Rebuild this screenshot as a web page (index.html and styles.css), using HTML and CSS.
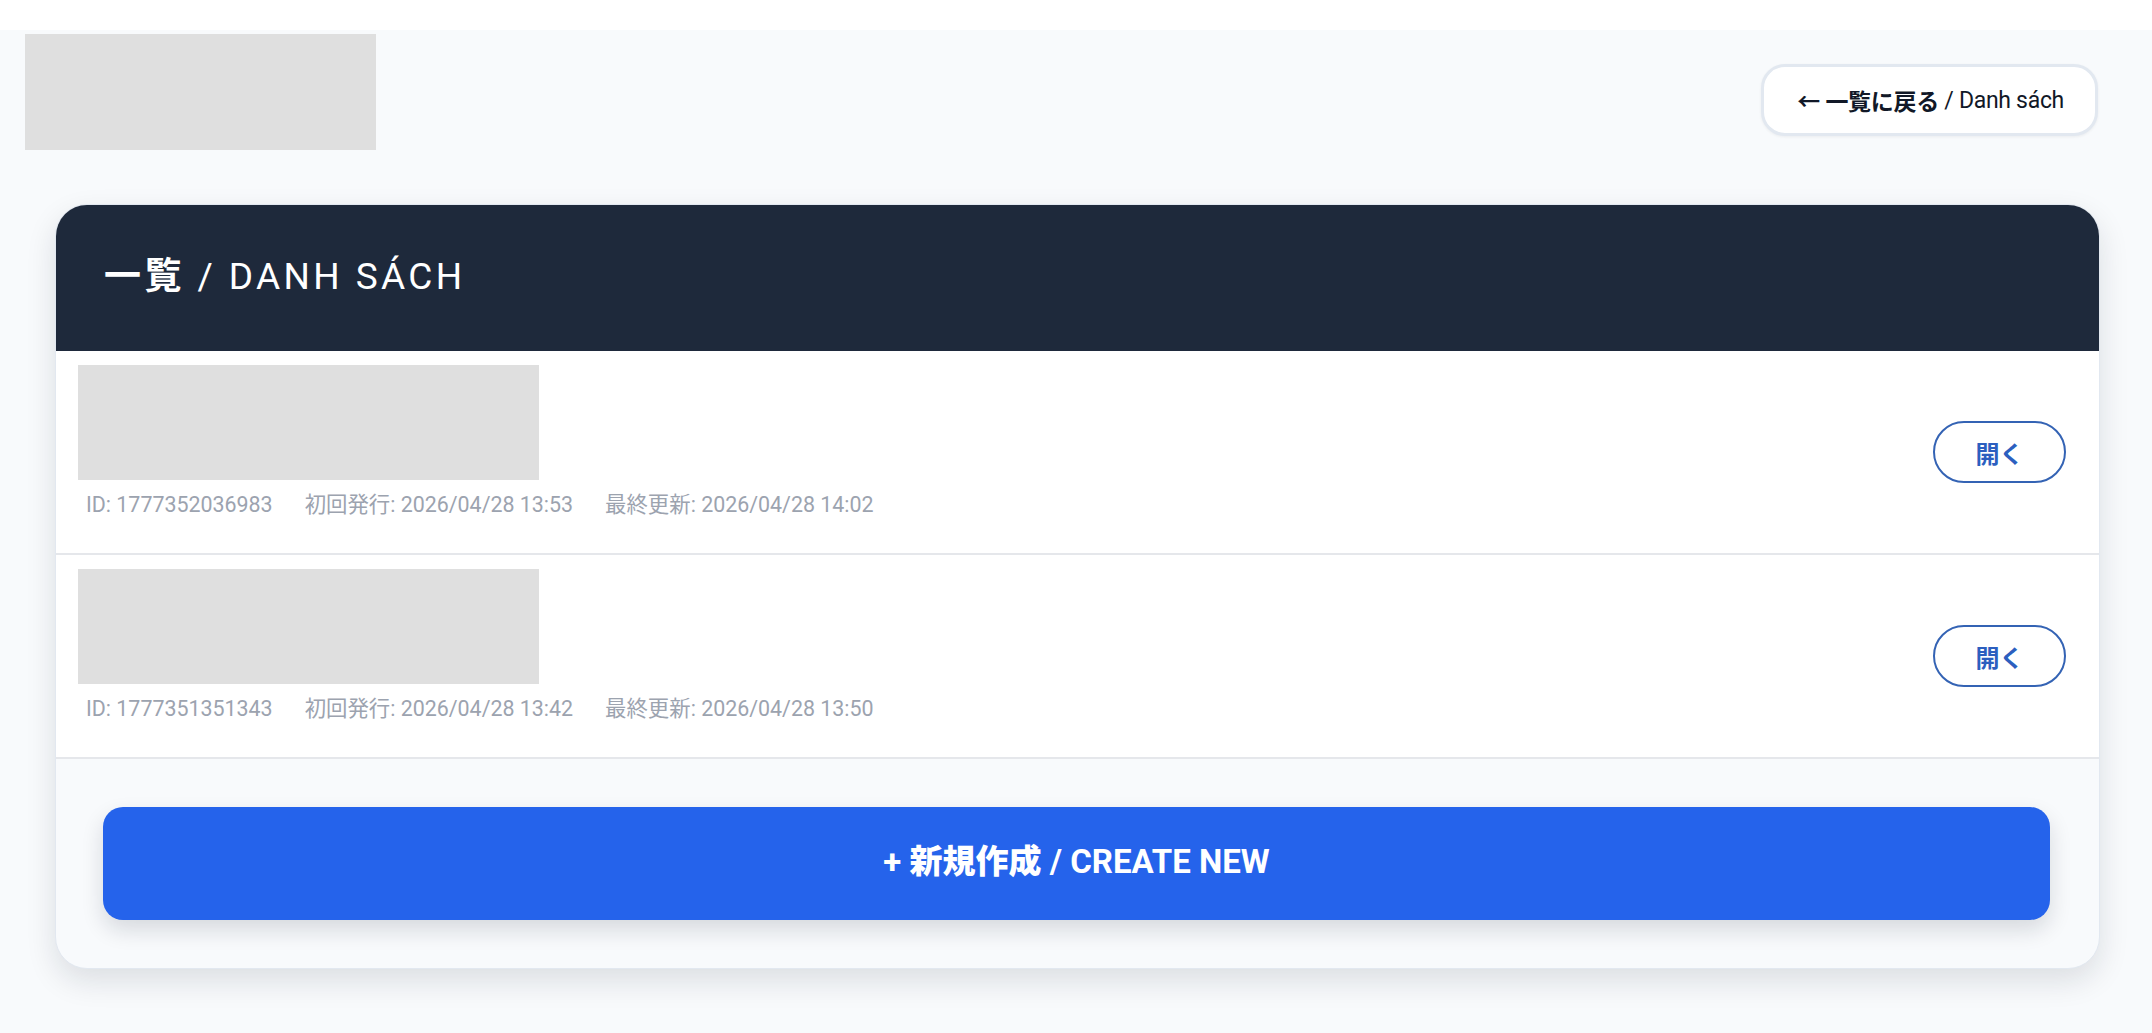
FILE: index.html
```html
<!DOCTYPE html>
<html lang="ja">
<head>
<meta charset="utf-8">
<title>一覧 / Danh sách</title>
<link rel="stylesheet" href="styles.css">
</head>
<body>
<div class="topstrip"></div>
<main class="page">
  <div class="topbar">
    <div class="logo-ph"></div>
    <a class="back-btn" href="#"><span class="ja">← 一覧に戻る</span> / Danh sách</a>
  </div>
  <section class="card">
    <header class="card-head">
      <h1 class="card-title"><span class="ja">一覧</span> / DANH SÁCH</h1>
    </header>
    <ul class="list">
      <li class="row">
        <div class="row-main">
          <div class="thumb"></div>
          <div class="meta">
            <span>ID: 1777352036983</span>
            <span>初回発行: 2026/04/28 13:53</span>
            <span>最終更新: 2026/04/28 14:02</span>
          </div>
        </div>
        <button class="open-btn" type="button">開く</button>
      </li>
      <li class="row">
        <div class="row-main">
          <div class="thumb"></div>
          <div class="meta">
            <span>ID: 1777351351343</span>
            <span>初回発行: 2026/04/28 13:42</span>
            <span>最終更新: 2026/04/28 13:50</span>
          </div>
        </div>
        <button class="open-btn" type="button">開く</button>
      </li>
    </ul>
    <div class="card-foot">
      <button class="create-btn" type="button"><span class="create-label">+ <span class="ja">新規作成</span> / CREATE NEW</span></button>
    </div>
  </section>
</main>
</body>
</html>
```

FILE: styles.css
```css
* { box-sizing: border-box; }

html, body {
  margin: 0;
  padding: 0;
}

body {
  background: #f8fafc;
  font-family: Roboto, "Noto Sans CJK JP", sans-serif;
  color: #1e293b;
  min-height: 1033px;
}

.topstrip {
  height: 30px;
  background: #ffffff;
}

.page {
  display: flex;
  flex-direction: column;
}

.topbar {
  display: flex;
  justify-content: space-between;
  align-items: flex-start;
  padding: 4px 54px 0 25px;
}

.logo-ph {
  width: 351px;
  height: 116px;
  background: #dfdfdf;
}

.back-btn {
  margin-top: 30px;
  display: inline-flex;
  align-items: center;
  height: 72px;
  padding: 0 31px 0 33px;
  background: #ffffff;
  border: 3px solid #e2e8f0;
  border-radius: 24px;
  font-size: 23px;
  font-weight: 400;
  color: #111827;
  text-decoration: none;
  white-space: pre;
  letter-spacing: -0.3px;
  box-shadow: 0 1px 3px rgba(15, 23, 42, 0.06);
}

.back-btn .ja {
  font-weight: 700;
}

.card {
  margin: 54px 52px 0 55px;
  background: #f8fafc;
  border: 1px solid #e2e8f0;
  border-radius: 32px;
  overflow: hidden;
  box-shadow: 0 12px 30px rgba(15, 23, 42, 0.12);
}

.card-head {
  height: 146px;
  background: #1e293b;
  display: flex;
  align-items: center;
  padding-left: 48px;
  padding-bottom: 3px;
}

.card-title {
  margin: 0;
  color: #ffffff;
  font-size: 37px;
  line-height: 44px;
  font-weight: 400;
  letter-spacing: 3.4px;
  white-space: pre;
}

.card-title .ja {
  font-weight: 700;
}

.list {
  list-style: none;
  margin: 0;
  padding: 0;
}

.row {
  display: flex;
  align-items: center;
  justify-content: space-between;
  padding: 0 33px 0 22px;
  background: #ffffff;
  border-bottom: 2px solid #e5e7eb;
}

.row-main {
  display: flex;
  flex-direction: column;
  padding: 14px 0 35px;
}

.thumb {
  width: 461px;
  height: 115px;
  background: #dfdfdf;
}

.meta {
  margin-top: 12px;
  padding-left: 8px;
  display: flex;
  gap: 32px;
  font-size: 21.4px;
  line-height: 26px;
  color: #9ca3af;
  white-space: pre;
}

.open-btn {
  width: 133px;
  height: 62px;
  border: 2px solid #3463b4;
  border-radius: 31px;
  background: #ffffff;
  color: #2c5fbf;
  font-family: Roboto, "Noto Sans CJK JP", sans-serif;
  font-size: 24px;
  font-weight: 700;
  padding: 0;
  cursor: pointer;
}

.card-foot {
  padding: 48px 49px 48px 47px;
}

.create-btn {
  display: flex;
  align-items: center;
  justify-content: center;
  width: 100%;
  height: 113px;
  border: none;
  border-radius: 20px;
  background: #2563eb;
  color: #ffffff;
  font-family: Roboto, "Noto Sans CJK JP", sans-serif;
  font-size: 33px;
  font-weight: 700;
  white-space: pre;
  box-shadow: 0 10px 22px rgba(15, 23, 42, 0.14);
  cursor: pointer;
  padding: 0 0 4px;
}

.create-label {
  line-height: 40px;
}

.create-btn .ja {
  font-weight: 900;
}
```
